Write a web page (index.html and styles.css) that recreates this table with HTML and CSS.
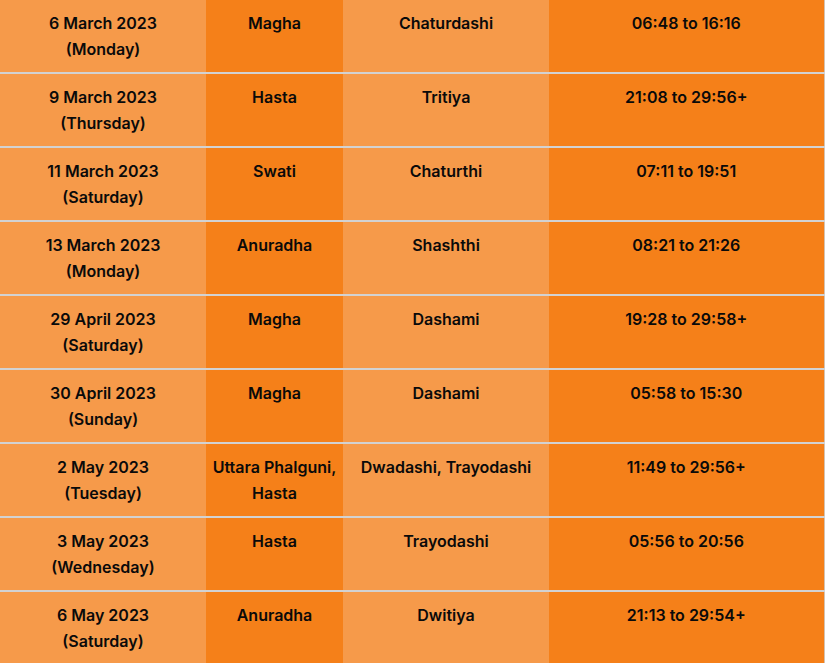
FILE: index.html
```html
<!DOCTYPE html>
<html lang="en">
<head>
<meta charset="utf-8">
<title>Muhurat Dates</title>
<link rel="stylesheet" href="styles.css">
</head>
<body>
<table class="muhurat">
  <colgroup>
    <col class="c1"><col class="c2"><col class="c3"><col class="c4">
  </colgroup>
  <tbody>
    <tr><td class="light">6 March 2023<br>(Monday)</td><td class="dark">Magha</td><td class="light">Chaturdashi</td><td class="dark">06:48 to 16:16</td></tr>
    <tr><td class="light">9 March 2023<br>(Thursday)</td><td class="dark">Hasta</td><td class="light">Tritiya</td><td class="dark">21:08 to 29:56+</td></tr>
    <tr><td class="light">11 March 2023<br>(Saturday)</td><td class="dark">Swati</td><td class="light">Chaturthi</td><td class="dark">07:11 to 19:51</td></tr>
    <tr><td class="light">13 March 2023<br>(Monday)</td><td class="dark">Anuradha</td><td class="light">Shashthi</td><td class="dark">08:21 to 21:26</td></tr>
    <tr><td class="light">29 April 2023<br>(Saturday)</td><td class="dark">Magha</td><td class="light">Dashami</td><td class="dark">19:28 to 29:58+</td></tr>
    <tr><td class="light">30 April 2023<br>(Sunday)</td><td class="dark">Magha</td><td class="light">Dashami</td><td class="dark">05:58 to 15:30</td></tr>
    <tr><td class="light">2 May 2023<br>(Tuesday)</td><td class="dark">Uttara Phalguni, Hasta</td><td class="light">Dwadashi, Trayodashi</td><td class="dark">11:49 to 29:56+</td></tr>
    <tr><td class="light">3 May 2023<br>(Wednesday)</td><td class="dark">Hasta</td><td class="light">Trayodashi</td><td class="dark">05:56 to 20:56</td></tr>
    <tr><td class="light">6 May 2023<br>(Saturday)</td><td class="dark">Anuradha</td><td class="light">Dwitiya</td><td class="dark">21:13 to 29:54+</td></tr>
  </tbody>
</table>
</body>
</html>
```
FILE: styles.css
```css
html, body {
  margin: 0;
  padding: 0;
  background: #1b2630;
  overflow: hidden;
}
.muhurat {
  width: 824px;
  border-collapse: collapse;
  table-layout: fixed;
  border-right: 1px solid #d4c2b0;
  font-family: Inter, "Noto Sans", sans-serif;
  font-weight: 600;
  font-size: 16px;
  line-height: 26px;
  color: #0a0a0a;
}
.c1 { width: 206px; }
.c2 { width: 137px; }
.c3 { width: 206px; }
.c4 { width: 275px; }
.muhurat td {
  padding: 10px 4px;
  text-align: center;
  vertical-align: top;
  border-bottom: 2px solid #d2d2d2;
}
.muhurat td.light { background: #f69a4a; }
.muhurat td.dark { background: #f58019; }
```
